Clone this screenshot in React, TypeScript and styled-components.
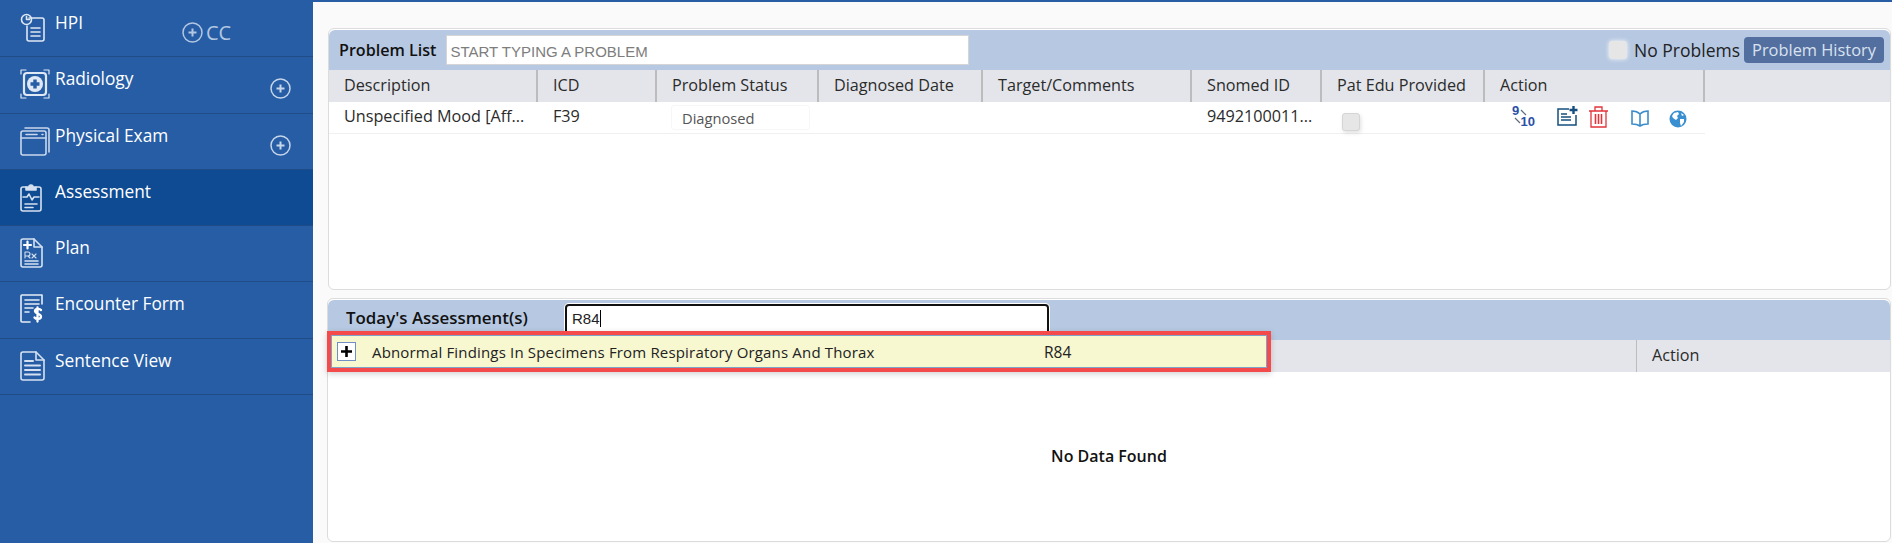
import styled, { createGlobalStyle } from "styled-components";
import type { ReactNode } from "react";

const stroke = { fill: "none", stroke: "currentColor", strokeWidth: 1.6, strokeLinecap: "round", strokeLinejoin: "round" } as const;

const HpiIcon = () => (
  <svg width="26" height="30" viewBox="0 0 26 30" {...stroke}>
    <path d="M9 5h13a2 2 0 0 1 2 2v19a2 2 0 0 1-2 2H9a2 2 0 0 1-2-2V13" />
    <circle cx="6.5" cy="6.5" r="5" />
    <path d="M6.5 3.5v3h3M11 15h9M11 19h9M11 23h9" />
  </svg>
);

const RadiologyIcon = () => (
  <svg width="30" height="30" viewBox="0 0 30 30">
    <path d="M1 5V1h5M24 1h5v4M1 25v4h5M24 29h5v-4" {...stroke} strokeWidth={1.2} />
    <rect x="4" y="4" width="22" height="22" rx="3" fill="none" stroke="currentColor" strokeWidth="2.2" />
    <circle cx="15" cy="15" r="8" fill="currentColor" />
    <path d="M15 10.5v9M10.5 15h9" stroke="#265da5" strokeWidth="3.4" />
  </svg>
);

const ExamIcon = () => (
  <svg width="30" height="30" viewBox="0 0 30 30" {...stroke} color="#c9d8ec">
    <rect x="1" y="5" width="25" height="24" rx="2" />
    <path d="M1 12h25M5 2h22a2 2 0 0 1 2 2v22M6 8.5h11M22 8.5h1" />
  </svg>
);

const AssessmentIcon = () => (
  <svg width="22" height="30" viewBox="0 0 22 30" {...stroke} color="#d5e1f1">
    <path d="M6 5H3a2 2 0 0 0-2 2v20a2 2 0 0 0 2 2h16a2 2 0 0 0 2-2V7a2 2 0 0 0-2-2h-3" />
    <path d="M6 8V5h3a2 2 0 0 1 4 0h3v3z" fill="currentColor" />
    <path d="M3 15h4l2-3 3 6 2-3h5M5 22h12M5 25.500h8" />
  </svg>
);

const PlanIcon = () => (
  <svg width="23" height="30" viewBox="0 0 23 30" {...stroke} color="#d5e1f1">
    <path d="M14 1H3a2 2 0 0 0-2 2v24a2 2 0 0 0 2 2h17a2 2 0 0 0 2-2V9z" />
    <path d="M14 1v8h8" />
    <path d="M7.500 3.500v7M4 7h7" strokeWidth="2.200" color="#fff" />
    <path d="M5 23h13M5 26h13" />
    <path d="M5 20v-6h3a1.500 1.500 0 0 1 0 4H5M8 18l2 2M12 16l4 4M16 16l-4 4" strokeWidth="1.100" />
  </svg>
);

const EncounterIcon = () => (
  <svg width="23" height="29" viewBox="0 0 23 29" {...stroke} color="#e6edf7">
    <path d="M22 1H2a1 1 0 0 0-1 1v25a1 1 0 0 0 1 1h8M22 1v9" />
    <path d="M5 6h14M5 10h14M5 14h8M5 18h4" />
    <path d="M21 16c-1-1.500-6-2-6 1s6 2.500 6 5.500-5 3-6.500 1M17.500 13.500v14" strokeWidth="2.300" color="#fff" />
  </svg>
);

const SentenceIcon = () => (
  <svg width="25" height="30" viewBox="0 0 25 30" {...stroke} color="#d5e1f1">
    <path d="M16 1H3a2 2 0 0 0-2 2v24a2 2 0 0 0 2 2h19a2 2 0 0 0 2-2V9z" />
    <path d="M16 1v8h8" />
    <path d="M5 10h8M5 14.500h15M5 19h15M5 23.500h15" strokeWidth="2" />
  </svg>
);

const PlusCircle = () => (
  <svg width="21" height="21" viewBox="0 0 21 21" fill="none" stroke="currentColor">
    <circle cx="10.500" cy="10.500" r="9.500" strokeWidth="1.500" />
    <path d="M10.500 6.500v8M6.500 10.500h8" strokeWidth="2" />
  </svg>
);

const NumericIcon = () => (
  <svg width="22" height="22" viewBox="0 0 22 22">
    <path d="M9 5l5 5M3 13l5 5" stroke="#5f6b7c" strokeWidth="1.200" />
  </svg>
);

const NotePlusIcon = () => (
  <svg width="21" height="20" viewBox="0 0 21 20" fill="none" stroke="#144f7f" strokeWidth="1.500">
    <path d="M12 3H1v16h18V9" />
    <path d="M4 8h6M4 11h10M4 14h10" />
    <path d="M16.500 0v8M12.500 4h8" strokeWidth="2.400" />
  </svg>
);

const TrashIcon = () => (
  <svg width="21" height="22" viewBox="0 0 21 22" fill="none" stroke="#e4333a" strokeWidth="1.300">
    <path d="M1 5h19M7 5V1h7v4M3 5v16h15V5" />
    <path d="M7.500 8v10M10.500 8v10M13.500 8v10" strokeWidth="1.600" />
  </svg>
);

const BookIcon = () => (
  <svg width="18" height="17" viewBox="0 0 18 17" fill="none" stroke="#3d8dc9" strokeWidth="1.600">
    <path d="M9 4C7 2 4 1 1 1v13c3 0 6 .5 8 2 2-1.500 5-2 8-2V1c-3 0-6 1-8 3zM9 4v12" />
  </svg>
);

const GlobeIcon = () => (
  <svg width="18" height="18" viewBox="0 0 18 18">
    <circle cx="9" cy="9" r="8.500" fill="#3a8fd1" />
    <path d="M5 3l4-1 1 2-2 2 1 2-2 2-3-2-1-2zM11 9l4 0 0 3-3 4-1-3zM12 3l3 2-2 1z" fill="#fff" />
  </svg>
);

const navItems: { label: string; icon: ReactNode; active?: boolean; plus?: boolean; cc?: boolean }[] = [
  { label: "HPI", icon: <HpiIcon />, cc: true },
  { label: "Radiology", icon: <RadiologyIcon />, plus: true },
  { label: "Physical Exam", icon: <ExamIcon />, plus: true },
  { label: "Assessment", icon: <AssessmentIcon />, active: true },
  { label: "Plan", icon: <PlanIcon /> },
  { label: "Encounter Form", icon: <EncounterIcon /> },
  { label: "Sentence View", icon: <SentenceIcon /> },
];

const problemColumns = ["Description", "ICD", "Problem Status", "Diagnosed Date", "Target/Comments", "Snomed ID", "Pat Edu Provided", "Action", ""];

export default function App() {
  return (
    <>
      <GlobalStyle />
      <Page>
        <Sidebar>
          {navItems.map((item) => (
            <NavRow key={item.label} $active={item.active}>
              <NavIcon>{item.icon}</NavIcon>
              <NavLabel>{item.label}</NavLabel>
              {item.cc && (
                <CcGroup>
                  <PlusCircle />
                  CC
                </CcGroup>
              )}
              {item.plus && (
                <NavPlus>
                  <PlusCircle />
                </NavPlus>
              )}
            </NavRow>
          ))}
        </Sidebar>
        <Main>
          <ProblemPanel>
            <PanelHeader>
              <ProblemTitle>Problem List</ProblemTitle>
              <ProblemInput placeholder="START TYPING A PROBLEM" />
              <HeaderRight>
                <FakeCheck />
                <NoProblems>No Problems</NoProblems>
                <HistoryButton>Problem History</HistoryButton>
              </HeaderRight>
            </PanelHeader>
            <ProblemHead>
              {problemColumns.map((c, i) => (
                <HeadCell key={i}>{c}</HeadCell>
              ))}
            </ProblemHead>
            <ProblemRow>
              <BodyCell>Unspecified Mood [Aff...</BodyCell>
              <BodyCell>F39</BodyCell>
              <StatusCell>
                <StatusBox>Diagnosed</StatusBox>
              </StatusCell>
              <BodyCell />
              <BodyCell />
              <BodyCell>9492100011...</BodyCell>
              <CheckCell>
                <RowCheck />
              </CheckCell>
              <ActionCell>
                <NumericWrap>
                  <NumericIcon />
                  <NumTop>9</NumTop>
                  <NumBottom>10</NumBottom>
                </NumericWrap>
                <NotePlusWrap>
                  <NotePlusIcon />
                </NotePlusWrap>
                <TrashWrap>
                  <TrashIcon />
                </TrashWrap>
                <BookWrap>
                  <BookIcon />
                </BookWrap>
                <GlobeWrap>
                  <GlobeIcon />
                </GlobeWrap>
              </ActionCell>
            </ProblemRow>
          </ProblemPanel>
          <AssessmentPanel>
            <PanelHeader>
              <AssessmentTitle>Today's Assessment(s)</AssessmentTitle>
              <AssessmentInput>
                R84
                <Caret />
              </AssessmentInput>
            </PanelHeader>
            <AssessmentHead>
              <AssessmentSpacer />
              <AssessmentAction>Action</AssessmentAction>
            </AssessmentHead>
            <EmptyState>No Data Found</EmptyState>
            <Suggestion>
              <ExpandBox>
                <svg width="11" height="11" viewBox="0 0 11 11">
                  <path d="M5.500 0v11M0 5.500h11" stroke="#000" strokeWidth="2.600" />
                </svg>
              </ExpandBox>
              <SuggestionText>Abnormal Findings In Specimens From Respiratory Organs And Thorax</SuggestionText>
              <SuggestionCode>R84</SuggestionCode>
            </Suggestion>
          </AssessmentPanel>
        </Main>
      </Page>
    </>
  );
}

// --- Styles ---

const GlobalStyle = createGlobalStyle`
  html, body {
    margin: 0;
    padding: 0;
    height: 100%;
    overflow: hidden;
    background: #fafafa;
  }
  * {
    box-sizing: border-box;
  }
  body {
    font-family: "Open Sans", "Noto Sans", sans-serif;
  }
`;

const Page = styled.div`
  display: flex;
  width: 1892px;
  height: 543px;
`;

const Sidebar = styled.nav`
  flex: 0 0 313px;
  padding-top: 1px;
  background: #265da5;
  color: #fff;
`;

const NavRow = styled.div<{ $active?: boolean }>`
  display: flex;
  align-items: flex-start;
  height: 56.3px;
  padding: 12px 0 0 20px;
  background: ${(p) => (p.$active ? "#0f4b92" : "transparent")};
  border-bottom: 1px solid #1f4c86;
`;

const NavIcon = styled.div`
  flex: 0 0 35px;
  display: flex;
  justify-content: flex-start;
  color: #dfe8f4;
`;

const NavLabel = styled.span`
  font-size: 17.300px;
  line-height: 24px;
  margin-top: -2px;
  color: #fff;
`;

const CcGroup = styled.div`
  display: flex;
  align-items: center;
  gap: 3px;
  position: absolute;
  left: 182px;
  top: 22px;
  font-size: 20px;
  line-height: 21px;
  color: #b3c7e2;
`;

const NavPlus = styled.span`
  display: flex;
  margin: 9px 0 0 auto;
  padding-right: 22px;
  color: #c5d5ea;
`;

const Main = styled.main`
  flex: 1;
  display: flex;
  flex-direction: column;
  gap: 8px;
  padding: 26px 1px 0 14px;
  border-top: 2px solid #265da5;
  background: #fafafa;
`;

const PanelBase = styled.section`
  position: relative;
  background: #fff;
  border: 1px solid #dcdcdc;
  border-radius: 6px;
  padding-top: 1px;
`;

const ProblemPanel = styled(PanelBase)`
  height: 262px;
  margin-left: 1px;
`;

const AssessmentPanel = styled(PanelBase)`
  height: 244px;
`;

const PanelHeader = styled.header`
  display: flex;
  align-items: center;
  height: 40px;
  background: #b7c9e2;
  border-radius: 6px 6px 0 0;
`;

const ProblemTitle = styled.h2`
  margin: 0 10px 0 10px;
  font-size: 16.100px;
  font-weight: 600;
  color: #111;
  white-space: nowrap;
`;

const ProblemInput = styled.input`
  width: 523px;
  height: 30px;
  padding: 2px 3px 0;
  border: 1px solid #d5d5d5;
  background: #fff;
  font-family: "Liberation Sans", Arial, sans-serif;
  font-size: 15px;
  outline: none;
  &::placeholder {
    color: #7d7d7d;
    opacity: 1;
  }
`;

const HeaderRight = styled.div`
  display: flex;
  align-items: center;
  margin-left: auto;
  padding-right: 6px;
`;

const FakeCheck = styled.span`
  width: 18px;
  height: 18px;
  background: #e6e6e6;
  border-radius: 3px;
  box-shadow: 0 0 4px rgba(255, 255, 255, 0.9);
`;

const NoProblems = styled.span`
  margin: 0 4px 0 7px;
  font-size: 17.500px;
  color: #222;
  white-space: nowrap;
`;

const HistoryButton = styled.button`
  width: 140px;
  height: 26px;
  padding: 0;
  border: 0;
  border-radius: 4px;
  background: #536f9f;
  color: #d9e2f0;
  font-family: inherit;
  font-size: 16.400px;
  line-height: 24px;
  white-space: nowrap;
`;

const problemGrid = "209px 119px 162px 164px 209px 130px 163px 220px 1fr";

const HeadRow = styled.div`
  display: grid;
  height: 32px;
  background: #e3e5ea;
`;

const ProblemHead = styled(HeadRow)`
  grid-template-columns: ${problemGrid};
`;

const AssessmentHead = styled(HeadRow)`
  grid-template-columns: 1fr 253px;
`;

const HeadCell = styled.div`
  padding-left: 15px;
  border-right: 2px solid #bcbcbc;
  font-size: 16.200px;
  line-height: 31px;
  color: #2b2b2b;
  white-space: nowrap;
  &:last-child {
    border-right: 0;
  }
`;

const AssessmentSpacer = styled.div`
  border-right: 1px solid #bcbcbc;
`;

const AssessmentAction = styled(HeadCell)`
  padding-left: 15px;
`;

const ProblemRow = styled.div`
  display: grid;
  grid-template-columns: ${problemGrid};
  height: 32px;
  margin-right: 185px;
  border-bottom: 1px solid #f0f0f0;
`;

const BodyCell = styled.div`
  padding-left: 15px;
  font-size: 16.200px;
  line-height: 29px;
  color: #2b2b2b;
  white-space: nowrap;
`;

const StatusCell = styled(BodyCell)`
  padding: 3px 0 0 14px;
`;

const StatusBox = styled.div`
  width: 139px;
  height: 25px;
  padding-left: 10px;
  border: 1px solid #f7f7f7;
  border-radius: 3px;
  font-size: 14.700px;
  line-height: 25px;
  color: #555;
`;

const CheckCell = styled(BodyCell)`
  padding: 11px 0 0 20px;
`;

const RowCheck = styled.span`
  display: block;
  width: 18px;
  height: 18px;
  border: 1px solid #d5d5d5;
  border-radius: 3px;
  background: #e6e6e6;
  box-shadow: 1px 2px 4px rgba(0, 0, 0, 0.12);
`;

const ActionCell = styled.div`
  position: relative;
`;

const IconSlot = styled.span`
  position: absolute;
  display: flex;
`;

const NumericWrap = styled(IconSlot)`
  left: 27px;
  top: 3px;
  width: 23px;
  height: 23px;
  font-family: "Liberation Sans", Arial, sans-serif;
  font-weight: 700;
  font-size: 13px;
  line-height: 12px;
  color: #2c4fa8;
`;

const NumTop = styled.span`
  position: absolute;
  left: 0;
  top: 0;
`;

const NumBottom = styled.span`
  position: absolute;
  right: 0;
  bottom: 0;
`;

const NotePlusWrap = styled(IconSlot)`
  left: 72px;
  top: 4px;
`;

const TrashWrap = styled(IconSlot)`
  left: 103px;
  top: 4px;
`;

const BookWrap = styled(IconSlot)`
  left: 146px;
  top: 8px;
`;

const GlobeWrap = styled(IconSlot)`
  left: 184px;
  top: 8px;
`;

const AssessmentTitle = styled.h2`
  flex: 0 0 237px;
  margin: 0;
  padding: 0 0 6px 18px;
  font-size: 16.900px;
  font-weight: 600;
  color: #111;
  white-space: nowrap;
`;

const AssessmentInput = styled.div`
  display: flex;
  align-items: center;
  align-self: flex-start;
  width: 484px;
  height: 34px;
  margin-top: 4px;
  padding: 0 0 6px 5px;
  border: 2px solid #111;
  border-radius: 4px;
  background: #fff;
  box-shadow: 0 0 0 1px #fff;
  font-family: "Liberation Sans", Arial, sans-serif;
  font-size: 15px;
  color: #222;
`;

const Caret = styled.span`
  width: 1px;
  height: 17px;
  background: #000;
`;

const EmptyState = styled.div`
  display: flex;
  align-items: center;
  justify-content: center;
  height: 168px;
  font-size: 16px;
  font-weight: 600;
  color: #111;
`;

const Suggestion = styled.div`
  position: absolute;
  left: -1px;
  top: 32px;
  display: flex;
  align-items: center;
  width: 944px;
  height: 41px;
  padding-left: 6px;
  border: 4px solid #f44a4c;
  outline: 1px solid #7fa3c8;
  outline-offset: -5px;
  background: #f7f7d0;
  box-shadow: 0 2px 6px rgba(0, 0, 0, 0.18);
`;

const ExpandBox = styled.span`
  display: flex;
  align-items: center;
  justify-content: center;
  width: 19px;
  height: 19px;
  border: 1px solid #6f8fc6;
  background: #fff;
`;

const SuggestionText = styled.span`
  flex: 0 0 672px;
  margin: 1px 0 0 16px;
  font-size: 15px;
  letter-spacing: 0.17px;
  color: #222;
  white-space: nowrap;
`;

const SuggestionCode = styled.span`
  margin-top: 1px;
  font-size: 15.500px;
  color: #222;
`;
